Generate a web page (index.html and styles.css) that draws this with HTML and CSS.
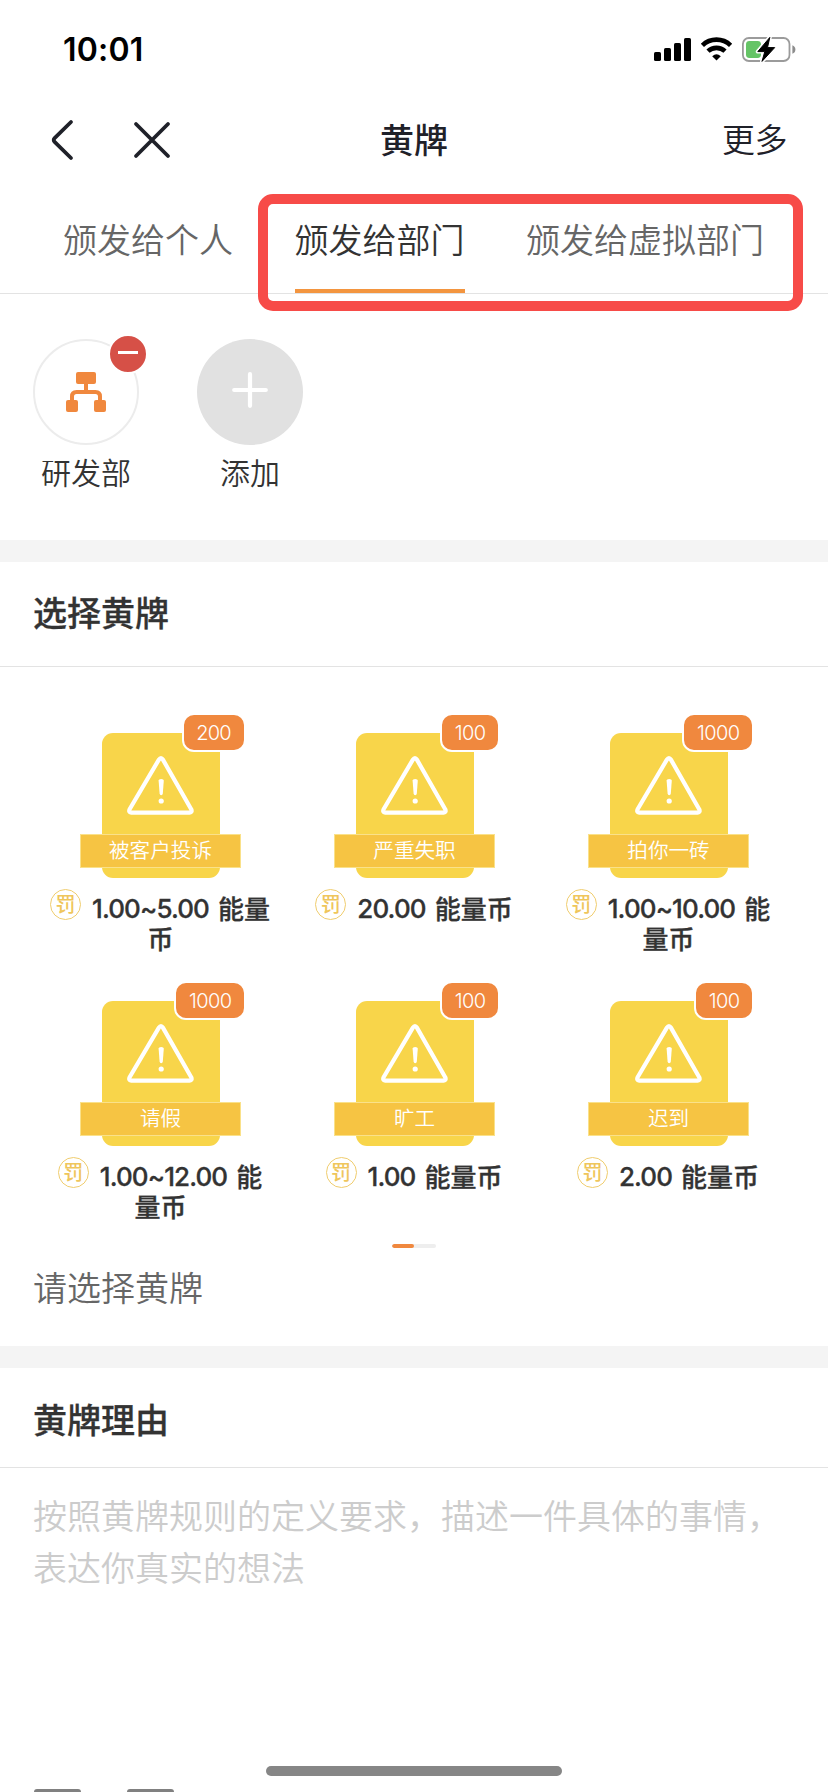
FILE: index.html
```html
<!DOCTYPE html>
<html lang="zh-CN">
<head>
<meta charset="utf-8">
<title>黄牌</title>
<link rel="stylesheet" href="styles.css">
</head>
<body>
<svg class="defs" aria-hidden="true">
  <symbol id="warning" viewBox="0 0 68 62">
    <path d="M31.9 4.6 2.6 54.2Q1.300 57.4 4.200 57.6H62.6Q65.600 57.400 64.2 54.2L35.900 4.6Q34 1.4 31.9 4.6Z" fill="none" stroke="#fff" stroke-width="4.2" stroke-linejoin="round"/>
    <path d="M31.6 25.500Q31.600 24 34.200 24T36.800 25.500L35.800 38.600Q35.600 40.200 34.200 40.200T32.600 38.600Z" fill="#fff"/>
    <circle cx="34.2" cy="46" r="2.6" fill="#fff"/>
  </symbol>
</svg>
<div class="phone">
  <header class="status">
    <span class="time">10:01</span>
    <svg class="status-icons" width="142" height="26" viewBox="0 0 142 26">
      <rect x="0" y="15" width="7" height="9" rx="1.6"/>
      <rect x="10" y="11" width="7" height="13" rx="1.6"/>
      <rect x="20" y="6" width="7" height="18" rx="1.6"/>
      <rect x="30" y="1" width="7" height="23" rx="1.6"/>
      <g fill="none" stroke="#000" stroke-width="4.6">
        <path d="M48.4 8.3a20.4 20.4 0 0 1 28.2 0"/>
        <path d="M54 14.2a12.4 12.4 0 0 1 17 0"/>
      </g>
      <path d="M62.5 23.6 58.2 19.2Q62.5 15.4 66.8 19.2Z"/>
      <rect x="88.9" y="1" width="46.6" height="23" rx="6" fill="none" stroke="#9b9b9b" stroke-width="1.8"/>
      <path d="M138.4 8.2a4.6 4.6 0 0 1 0 8.6z" fill="#8c8c8c"/>
      <rect x="92" y="4" width="15" height="17" rx="3.4" fill="#65c466"/>
      <path d="M115.8.4 103.8 14.6h7L108 24.4 120.7 10.6h-7.2z" stroke="#fff" stroke-width="4" stroke-linejoin="round"/>
      <path d="M115.8.4 103.8 14.6h7L108 24.4 120.7 10.6h-7.2z" stroke="#000" stroke-width="1" stroke-linejoin="round"/>
    </svg>
  </header>
  <nav class="navbar">
    <div class="nav-left">
      <svg width="120" height="42" viewBox="0 0 120 42" fill="none" stroke="#1f2129" stroke-width="3.8" stroke-linecap="round" stroke-linejoin="round">
        <path d="M20 3 3.600 19.2Q1.800 21 3.600 22.8L20 39"/>
        <path d="M85 5 117 37M117 5 85 37"/>
      </svg>
    </div>
    <h1 class="nav-title">黄牌</h1>
    <span class="nav-more">更多</span>
  </nav>
  <div class="tabs">
    <span class="tab">颁发给个人</span>
    <span class="tab active">颁发给部门</span>
    <span class="tab">颁发给虚拟部门</span>
    <div class="highlight"></div>
  </div>

  <section class="members">
    <div class="member">
      <div class="avatar">
        <svg width="40" height="40" viewBox="0 0 40 40" fill="#f0883e">
          <rect x="10" y="0" width="20" height="12" rx="2"/>
          <rect x="0" y="28" width="12" height="12" rx="2"/>
          <rect x="28" y="28" width="12" height="12" rx="2"/>
          <path d="M20 11V20M6 29V24.500Q6 20 10.500 20H29.500Q34 20 34 24.500V29" fill="none" stroke="#f0883e" stroke-width="4"/>
        </svg>
        <span class="remove"></span>
      </div>
      <span class="member-name">研发部</span>
    </div>
    <div class="member">
      <div class="avatar add">
        <svg width="36" height="36" viewBox="0 0 36 36" stroke="#fff" stroke-width="4.2" stroke-linecap="round"><path d="M18 2.200V33.800M2.200 18H33.800"/></svg>
      </div>
      <span class="member-name">添加</span>
    </div>
  </section>

  <section class="section picker">
    <h2 class="section-title">选择黄牌</h2>
    <div class="grid">
      <div class="cell">
        <div class="card"><svg class="warn"><use href="#warning"/></svg><span class="ribbon">被客户投诉</span><span class="badge">200</span></div>
        <div class="price"><i class="coin">罚</i><span class="num">1.00~5.00</span><span class="unit">能量</span></div>
        <div class="price-rest">币</div>
      </div>
      <div class="cell">
        <div class="card"><svg class="warn"><use href="#warning"/></svg><span class="ribbon">严重失职</span><span class="badge one">100</span></div>
        <div class="price"><i class="coin">罚</i><span class="num">20.00</span><span class="unit">能量币</span></div>
      </div>
      <div class="cell">
        <div class="card"><svg class="warn"><use href="#warning"/></svg><span class="ribbon">拍你一砖</span><span class="badge one">1000</span></div>
        <div class="price"><i class="coin">罚</i><span class="num">1.00~10.00</span><span class="unit">能</span></div>
        <div class="price-rest">量币</div>
      </div>
      <div class="cell">
        <div class="card"><svg class="warn"><use href="#warning"/></svg><span class="ribbon">请假</span><span class="badge one">1000</span></div>
        <div class="price"><i class="coin">罚</i><span class="num">1.00~12.00</span><span class="unit">能</span></div>
        <div class="price-rest">量币</div>
      </div>
      <div class="cell">
        <div class="card"><svg class="warn"><use href="#warning"/></svg><span class="ribbon">旷工</span><span class="badge one">100</span></div>
        <div class="price"><i class="coin">罚</i><span class="num">1.00</span><span class="unit">能量币</span></div>
      </div>
      <div class="cell">
        <div class="card"><svg class="warn"><use href="#warning"/></svg><span class="ribbon">迟到</span><span class="badge one">100</span></div>
        <div class="price"><i class="coin">罚</i><span class="num">2.00</span><span class="unit">能量币</span></div>
      </div>
    </div>
    <div class="pager"><span class="pager-on"></span></div>
    <p class="hint">请选择黄牌</p>
  </section>

  <section class="section reason">
    <h2 class="section-title reason-title">黄牌理由</h2>
    <p class="placeholder">按照黄牌规则的定义要求，描述一件具体的事情，表达你真实的想法</p>
  </section>
  <footer class="toolbar"><span class="tool"></span><span class="tool"></span></footer>
  <div class="home-bar"></div>
</div>
</body>
</html>
```
FILE: styles.css
```css
* { box-sizing: border-box; }
body { margin: 0; background: #fff; font-family: "Noto Sans CJK SC", sans-serif; color: #333; }
h1, h2, p { margin: 0; }
.defs { display: none; }
.phone { position: relative; display: flex; flex-direction: column; width: 828px; height: 1792px; overflow: hidden; background: #fff; }

.status { flex: none; display: flex; justify-content: space-between; align-items: flex-start; height: 88px; padding: 30px 33px 0 63px; }
.time { font: 600 32px/39px Inter, sans-serif; color: #000; letter-spacing: .2px; }
.status-icons { margin: 7px -1px 0 0; }

.navbar { flex: none; display: grid; grid-template-columns: 1fr auto 1fr; align-items: center; height: 104px; padding: 0 41px; color: #1f2129; }
.nav-left { display: flex; padding-left: 10px; }
.nav-title { font-size: 34px; font-weight: 500; line-height: 50px; padding-bottom: 3px; }
.nav-more { justify-self: end; font-size: 33px; line-height: 48px; font-weight: 350; padding-bottom: 4px; letter-spacing: -.5px; }

.tabs { flex: none; position: relative; display: flex; justify-content: space-between; height: 102px; padding: 0 64px 0 63px; border-bottom: 1px solid #e3e3e3; }
.tab { font-size: 34px; line-height: 94px; height: 101px; color: #666; font-weight: 350; }
.tab.active { color: #333; box-shadow: inset 0 -4px #f3953f; }
.highlight { position: absolute; left: 258px; top: 2px; width: 545px; height: 117px; border: 10px solid #f74b48; border-radius: 15px; }

.members { flex: none; display: flex; gap: 58px; height: 246px; padding: 45px 33px 0; }
.member { width: 106px; display: flex; flex-direction: column; align-items: center; }
.avatar { position: relative; width: 106px; height: 106px; border-radius: 50%; border: 2px solid #ececec; display: flex; align-items: center; justify-content: center; }
.avatar.add { background: #e1e1e1; border: 0; padding-bottom: 4px; }
.remove { position: absolute; left: 73px; top: -7px; width: 40px; height: 40px; border: 2px solid #fff; border-radius: 50%; background: #d65047; display: flex; align-items: center; justify-content: center; padding-bottom: 3px; }
.remove::after { content: ""; width: 20px; height: 3px; background: #fff; }
.member-name { margin-top: 4px; font-size: 30px; line-height: 44px; font-weight: 350; white-space: nowrap; }

.section { flex: none; border-top: 22px solid #f4f4f4; }
.section-title { height: 105px; padding-left: 33px; border-bottom: 1px solid #e3e3e3; font-size: 34px; line-height: 100px; font-weight: 500; -webkit-text-stroke: .3px #333; }

.picker { height: 806px; }
.grid { display: grid; grid-template-columns: repeat(3, 254px); grid-auto-rows: 268px; padding: 48px 32px 0 34px; }
.cell { display: flex; flex-direction: column; align-items: center; padding-top: 18px; }
.card { position: relative; width: 118px; height: 145px; flex: none; border-radius: 11px; background: #f8d54a; display: flex; justify-content: center; align-items: flex-start; padding-top: 22px; }
.warn { width: 68px; height: 62px; flex: none; }
.ribbon { position: absolute; left: -22px; top: 101px; width: 161px; height: 34px; background: #f6c443; border: 1px solid #fae18a; color: #fff; font-size: 20.600px; line-height: 29px; font-weight: 350; text-align: center; }
.badge { position: absolute; right: -25.500px; top: -20px; width: 64px; height: 39px; border: 2px solid #fff; border-radius: 12px; background: #f0883e; color: #fff; font: 300 20px/36px Inter, sans-serif; letter-spacing: -.9px; text-align: center; }
.badge.one { width: auto; padding: 0 12px 0 12.500px; letter-spacing: -.6px; }
.price { display: flex; align-items: center; margin: 16px 2px 0 0; height: 30px; font-size: 26px; line-height: 30px; font-weight: 500; white-space: nowrap; }
.unit, .price-rest { -webkit-text-stroke: .3px #333; }
.unit { margin-top: -3px; }
.num { margin: 0 9px 0 11px; font-family: Inter, sans-serif; font-size: 26px; font-weight: 500; letter-spacing: -.9px; -webkit-text-stroke: .3px #333; }
.price-rest { margin: -1px 1px 0 0; font-size: 26px; line-height: 30px; font-weight: 500; }
.coin { width: 31px; height: 31px; margin-top: -9px; border: 1.500px solid #f0cd6e; border-radius: 50%; color: #efc65c; font-size: 20px; line-height: 27px; font-style: normal; font-weight: 500; text-align: center; }

.pager { width: 44px; height: 4px; margin: -7px auto 0; border-radius: 2px; background: #eee; overflow: hidden; display: flex; }
.pager-on { width: 22px; border-radius: 2px; background: #f0883e; }
.hint { margin-top: 14px; padding-left: 33px; font-size: 34px; line-height: 50px; color: #666; font-weight: 350; }

.reason-title { height: 100px; line-height: 102px; }
.placeholder { padding: 21px 33px 0; font-size: 34px; line-height: 52px; color: #ccc; font-weight: 350; }

.toolbar { flex: none; display: flex; gap: 46px; height: 3px; margin-top: auto; padding-left: 34px; }
.tool { width: 47px; border-radius: 4px 4px 0 0; background: #808080; }
.home-bar { position: absolute; left: 266px; top: 1766px; width: 296px; height: 10px; border-radius: 5px; background: #868686; }
```
